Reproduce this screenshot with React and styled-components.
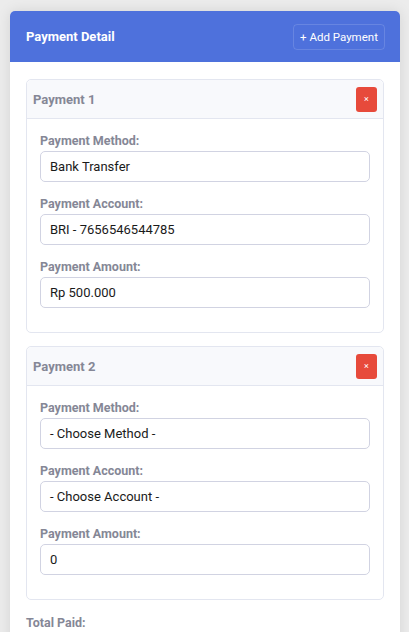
import React from "react";
import styled, { createGlobalStyle } from "styled-components";

const Global = createGlobalStyle`
  html, body { margin: 0; padding: 0; background: #ececec; }
  body { font-family: Roboto, "Noto Sans", Arial, sans-serif; }
  * { box-sizing: border-box; }
`;

const Page = styled.div`
  padding: 11px 9px 0 10px;
`;

const Card = styled.div`
  background: #fff;
  border-radius: 5px;
  box-shadow: 0 0 14px rgba(0, 0, 0, 0.1);
  overflow: hidden;
`;

const CardHeader = styled.div`
  height: 51px;
  background: #4e71dc;
  display: flex;
  align-items: center;
  justify-content: space-between;
  padding: 0 15px 0 16px;
`;

const Title = styled.h2`
  margin: 0;
  font-size: 13px;
  font-weight: 700;
  color: #fff;
`;

const AddButton = styled.button`
  height: 26px;
  width: 92px;
  background: transparent;
  border: 1px solid rgba(255, 255, 255, 0.14);
  border-radius: 4px;
  color: #fff;
  font-family: inherit;
  font-size: 11.5px;
  padding: 0;
`;

const CardBody = styled.div`
  padding: 17px 16px 20px 16px;
`;

const PaymentCard = styled.div`
  border: 1px solid #e3e6f0;
  border-radius: 5px;
  margin-bottom: 13px;
`;

const PaymentHeader = styled.div`
  height: 39px;
  background: #f8f9fc;
  border-bottom: 1px solid #e3e6f0;
  border-radius: 5px 5px 0 0;
  display: flex;
  align-items: center;
  justify-content: space-between;
  padding: 0 6px 0 6px;
`;

const PaymentTitle = styled.span`
  font-size: 13px;
  font-weight: 700;
  color: #858796;
`;

const DeleteButton = styled.button`
  width: 21px;
  height: 25px;
  background: #e74a3b;
  border: none;
  border-radius: 3px;
  color: #fff;
  font-size: 9px;
  line-height: 1;
  padding: 0;
  font-family: inherit;
`;

const PaymentBody = styled.div`
  padding: 12px 13px 12px 13px;
`;

const Group = styled.div`
  margin-bottom: 12px;
`;

const Label = styled.label`
  display: block;
  font-size: 12.5px;
  font-weight: 700;
  color: #858796;
  line-height: 20px;
`;

const Field = styled.div`
  height: 31px;
  border: 1px solid #d1d3e2;
  border-radius: 5px;
  display: flex;
  align-items: center;
  padding: 0 9px;
  font-size: 13px;
  color: #1a1a1a;
  background: #fff;
`;

const TotalLabel = styled.div`
  font-size: 12.5px;
  font-weight: 700;
  color: #858796;
  line-height: 20px;
`;

const payments = [
  { id: 1, method: "Bank Transfer", account: "BRI - 7656546544785", amount: "Rp 500.000" },
  { id: 2, method: "- Choose Method -", account: "- Choose Account -", amount: "0" },
];

export default function App() {
  return (
    <>
      <Global />
      <Page>
        <Card>
          <CardHeader>
            <Title>Payment Detail</Title>
            <AddButton>+ Add Payment</AddButton>
          </CardHeader>
          <CardBody>
            {payments.map((p) => (
              <PaymentCard key={p.id}>
                <PaymentHeader>
                  <PaymentTitle>Payment {p.id}</PaymentTitle>
                  <DeleteButton>×</DeleteButton>
                </PaymentHeader>
                <PaymentBody>
                  <Group>
                    <Label>Payment Method:</Label>
                    <Field>{p.method}</Field>
                  </Group>
                  <Group>
                    <Label>Payment Account:</Label>
                    <Field>{p.account}</Field>
                  </Group>
                  <Group>
                    <Label>Payment Amount:</Label>
                    <Field>{p.amount}</Field>
                  </Group>
                </PaymentBody>
              </PaymentCard>
            ))}
            <TotalLabel>Total Paid:</TotalLabel>
          </CardBody>
        </Card>
      </Page>
    </>
  );
}
